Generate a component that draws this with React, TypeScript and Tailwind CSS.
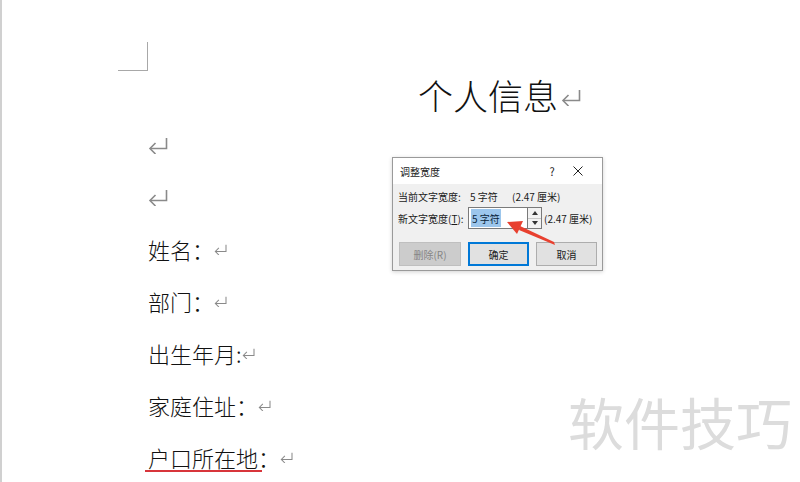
import React from 'react'

const cjk = { fontFamily: '"Noto Sans CJK SC", "Noto Sans", sans-serif' }

// Word 的段落标记
function ReturnMark({ w = 20, h = 17, className = '' }: { w?: number; h?: number; className?: string }) {
  return (
    <svg width={w} height={h} viewBox="0 0 20 17" className={className} fill="none" stroke="#8a8a8a" strokeWidth={1.6}>
      <path d="M18.5 1 V11.5 H2" />
      <path d="M7.5 6 L2 11.5 L7.5 17" />
    </svg>
  )
}

function Line({ children }: { children?: React.ReactNode }) {
  return <div className="h-[52px] flex items-center text-[22px] font-light text-[#111]">{children}</div>
}

function Dialog() {
  return (
    <div className="absolute left-[390px] top-[157px] w-[211px] h-[114px] border border-[#9a9a9a] bg-[#f0f0f0] shadow-[0_1px_4px_rgba(0,0,0,0.18)] text-[10px] text-[#1a1a1a] flex flex-col" style={cjk}>
      <div className="h-[26px] bg-white flex items-center pl-[7px]">
        <span>调整宽度</span>
        <span className="ml-auto w-[14px] text-center text-[11px]">?</span>
        <span className="w-[38px] flex justify-center mr-[5px]">
          <svg width="10" height="10" viewBox="0 0 10 10" stroke="#222" strokeWidth={1}>
            <path d="M0.5 0.5 L9.5 9.5 M9.5 0.5 L0.5 9.5" />
          </svg>
        </span>
      </div>
      <div className="flex flex-col pl-[5px] pt-[2px]">
        <div className="h-[20px] flex items-center">
          <span className="w-[72px]">当前文字宽度:</span>
          <span className="w-[42px]">5 字符</span>
          <span>(2.47 厘米)</span>
        </div>
        <div className="h-[22px] mt-[1px] flex items-center">
          <span className="w-[70px]">新文字宽度(<span className="underline">T</span>):</span>
          <div className="w-[60px] h-[22px] bg-white border border-[#7a7a7a] flex items-center pl-[2px]">
            <span className="bg-[#9cc6ec] h-[18px] px-[1px] flex items-center text-[#0a1f3a]">5 字符</span>
          </div>
          <div className="w-[14px] h-[22px] flex flex-col border border-l-0 border-[#7a7a7a] bg-white">
            <div className="flex-1 border-b border-[#c8c8c8] flex items-center justify-center bg-[#f2f2f2]">
              <svg width="6" height="4" viewBox="0 0 6 4"><path d="M0 4 L3 0 L6 4 Z" fill="#333" /></svg>
            </div>
            <div className="flex-1 flex items-center justify-center bg-[#f2f2f2]">
              <svg width="6" height="4" viewBox="0 0 6 4"><path d="M0 0 L3 4 L6 0 Z" fill="#333" /></svg>
            </div>
          </div>
          <span className="ml-[2px]">(2.47 厘米)</span>
        </div>
        <div className="mt-[13px] flex gap-[7px] pl-[1px]">
          <div className="w-[62px] h-[24px] bg-[#cccccc] border border-[#bfbfbf] text-[#858585] flex items-center justify-center">删除(R)</div>
          <div className="w-[61px] h-[24px] bg-[#e1e1e1] border-2 border-[#0078d7] flex items-center justify-center">确定</div>
          <div className="w-[61px] h-[24px] bg-[#e1e1e1] border border-[#adadad] flex items-center justify-center">取消</div>
        </div>
      </div>
    </div>
  )
}

export default function App() {
  return (
    <div className="relative w-[800px] h-[482px] overflow-hidden bg-white border-l-2 border-[#d0d0d0]" style={cjk}>
      {/* 页边角标记 */}
      <div className="ml-[116px] mt-[42px] w-[30px] h-[29px] border-r border-b border-[#a8a8a8]" />

      <div className="h-[48px] flex items-center pl-[416px] text-[35px] font-light text-[#111]">
        <span>个人信息</span>
        <ReturnMark className="ml-[3px] mt-[4px]" />
      </div>

      <div className="pl-[146px]">
        <Line><ReturnMark /></Line>
        <Line><ReturnMark /></Line>
        <Line><span>姓名：</span><ReturnMark w={13} h={11} /></Line>
        <Line><span>部门：</span><ReturnMark w={13} h={11} /></Line>
        <Line><span>出生年月:</span><ReturnMark w={13} h={11} /></Line>
        <Line><span>家庭住址：</span><ReturnMark w={13} h={11} /></Line>
        <Line>
          <span className="relative leading-none">
            户口所在地
            <span className="absolute left-[-3px] right-[-4px] bottom-[-4px] h-[2px] bg-[#d8353b]" />
          </span>
          <span>：</span>
          <ReturnMark w={13} h={11} />
        </Line>
      </div>

      <Dialog />

      <svg className="absolute left-0 top-0 pointer-events-none" width="800" height="482">
        <polygon points="553,245 552,242 518,226 517,230" fill="#e8402f" />
        <polygon points="505,222 521,221 515,234" fill="#e8402f" />
      </svg>

      <div className="absolute left-[566px] top-[393px] text-[56px] leading-none text-[#dcdcdc]">软件技巧</div>
    </div>
  )
}
